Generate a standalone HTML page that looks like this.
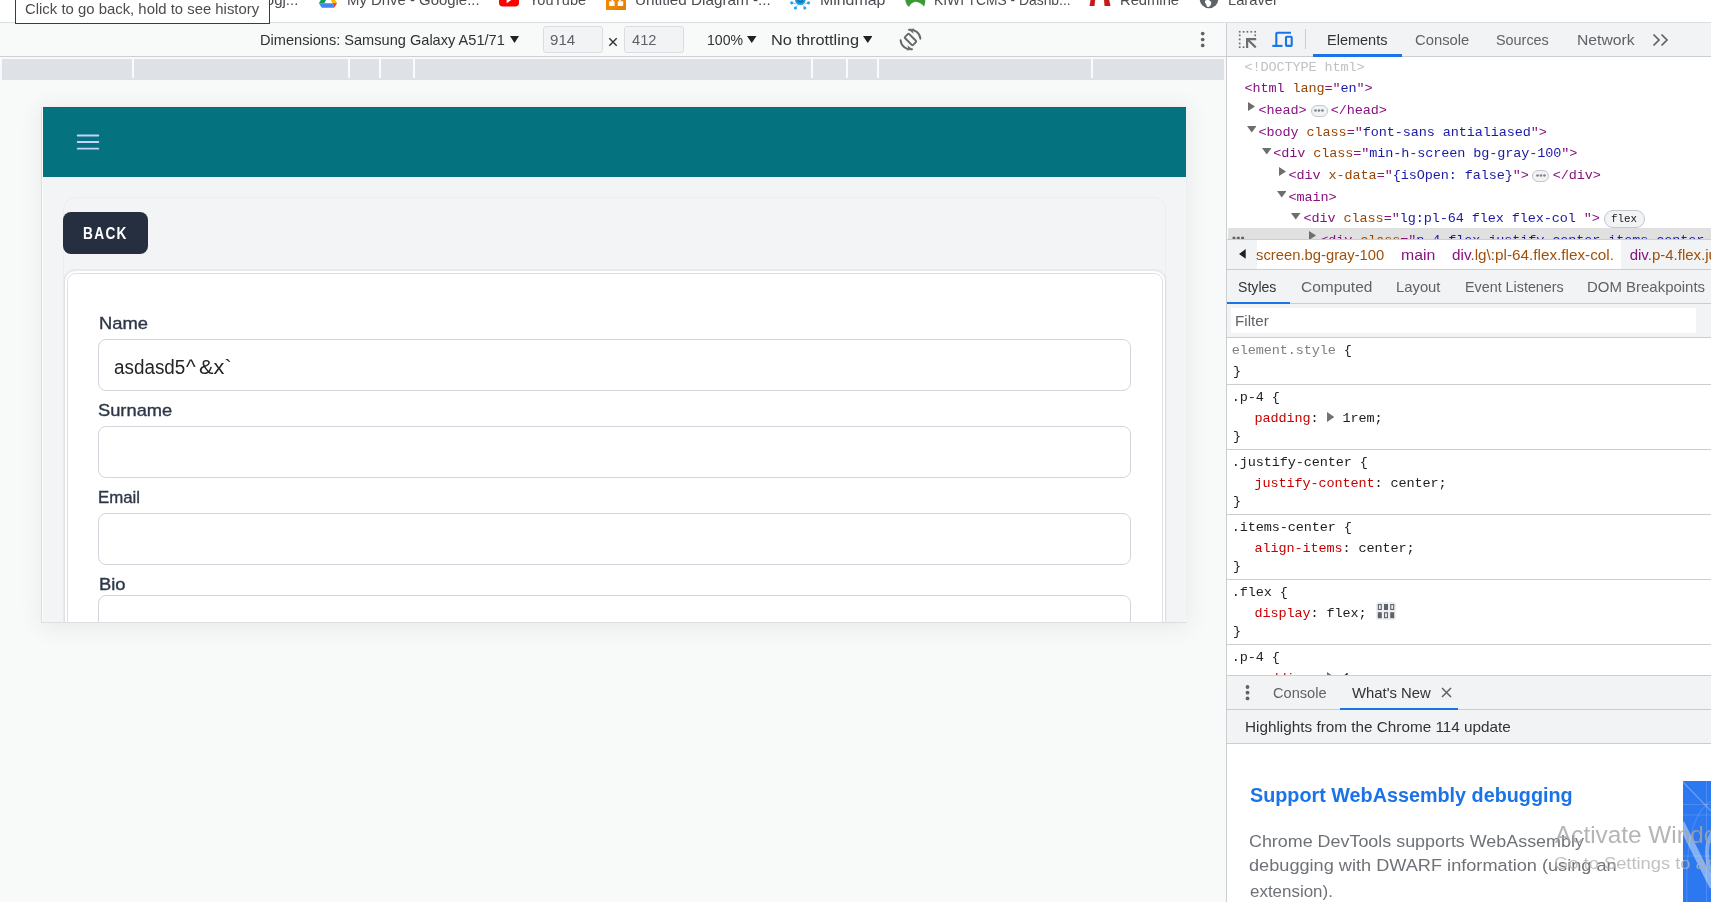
<!DOCTYPE html>
<html lang="en"><head><meta charset="utf-8"><title>DevTools</title>
<style>
html,body{margin:0;padding:0}
body{width:1711px;height:902px;overflow:hidden;position:relative;background:#f8f9f9;font-family:"Liberation Sans",sans-serif;}
.a{position:absolute;display:block}
.t{position:absolute;white-space:pre;line-height:1;font-family:"Liberation Sans",sans-serif;transform-origin:0 0;}
.m{font-family:"Liberation Mono",monospace;}
.bx{position:absolute;box-sizing:border-box}
</style></head><body>
<div id="root" style="position:absolute;left:0;top:0;width:1711px;height:902px;will-change:transform">

<div class="bx" style="left:0;top:0;width:1711px;height:23px;background:#fff;border-bottom:1px solid #dcdfe2;overflow:hidden">
<span id="bm0" class="t" style="left:265.80px;top:-7.90px;font-size:15px;color:#494c50;">ogj...</span>
<span id="bm1" class="t" style="left:347.30px;top:-7.90px;font-size:15px;color:#494c50;transform:scaleX(0.9941);">My Drive - Google...</span>
<span id="bm2" class="t" style="left:529.02px;top:-7.90px;font-size:15px;color:#494c50;transform:scaleX(0.9685);">YouTube</span>
<span id="bm3" class="t" style="left:635.46px;top:-7.90px;font-size:15px;color:#494c50;transform:scaleX(1.0183);">Untitled Diagram -...</span>
<span id="bm4" class="t" style="left:819.76px;top:-7.90px;font-size:15px;color:#494c50;transform:scaleX(1.0583);">Mindmap</span>
<span id="bm5" class="t" style="left:933.63px;top:-7.90px;font-size:15px;color:#494c50;transform:scaleX(0.9223);">KIWI TCMS - Dashb...</span>
<span id="bm6" class="t" style="left:1119.71px;top:-7.90px;font-size:15px;color:#494c50;transform:scaleX(0.9838);">Redmine</span>
<span id="bm7" class="t" style="left:1227.97px;top:-7.90px;font-size:15px;color:#494c50;transform:scaleX(0.9814);">Laravel</span>
<svg class="a" style="left:318px;top:-4px" width="20" height="12" viewBox="0 0 20 12">
<path d="M0.900 7.300L6.300 7.300L10.300 0L5.100 0z" fill="#0f9d58"/><path d="M14.400 7L19.100 7.300L14.900 0L10.400 0z" fill="#fbbc04"/>
<path d="M0.900 7.300L14.500 7.300L16.500 11.500L15.900 11.800L3.700 11.800z" fill="#4285f4"/><path d="M14.400 7L19.100 7.300L16.500 11.500z" fill="#ea4335"/></svg>
<svg class="a" style="left:499px;top:-9px" width="20" height="16" viewBox="0 0 21 16">
<rect x="0" y="0" width="21" height="16" rx="4" fill="#ff0000"/><path d="M8 3.500L14.500 8L8 12.500z" fill="#fff"/></svg>
<svg class="a" style="left:605.500px;top:-10.300px" width="20.300" height="20.300" viewBox="0 0 21 21">
<rect x="0" y="0" width="21" height="21" rx="1.500" fill="#f08705"/>
<path d="M7 21L21 12V21z" fill="#e07a00" opacity=".5"/><rect x="3.300" y="11.600" width="5.600" height="5" rx="0.800" fill="#fff"/><rect x="12.200" y="11.600" width="5.600" height="5" rx="0.800" fill="#fff"/>
<path d="M6.200 11.500L10 5M14.800 11.500L11 5" stroke="#fff" stroke-width="1.600"/></svg>
<svg class="a" style="left:789px;top:-6px" width="22" height="16" viewBox="0 0 22 16">
<path d="M7 10L2.700 8.800M15.600 10L19.500 8.800M9 10.500L6.400 14M13.600 10.500L15.800 14" stroke="#7cc7f0" stroke-width="0.900" fill="none"/>
<circle cx="11.300" cy="5.600" r="5.400" fill="#1e9be3"/><path d="M8.600 6.500Q11.300 9.300 14 6.500" stroke="#0b5f96" stroke-width="1.100" fill="none"/>
<g fill="#22a3ea"><circle cx="2.700" cy="8.800" r="1.600"/><circle cx="19.500" cy="8.800" r="1.600"/><circle cx="6.400" cy="14" r="1.600"/><circle cx="15.800" cy="14" r="1.600"/></g></svg>
<svg class="a" style="left:904px;top:-4px" width="22" height="12" viewBox="0 0 22 12">
<path d="M1.300 0L1.300 4.500C2 8 3.500 10 5.100 10.800C6.200 8.200 8.200 6.400 11.400 5.800C15 6.200 18 8 20 10.400C21.300 8 21.600 4 21 0z" fill="#3a9b35"/></svg>
<svg class="a" style="left:1089px;top:-12px" width="22" height="18" viewBox="0 0 22 18">
<path d="M0.500 18L3 4h4L5.500 18z" fill="#c61a1a"/><path d="M15.500 18L14.500 4h4l3 14z" fill="#c61a1a"/><path d="M5 4c3-5 9-5 12 0z" fill="#c61a1a"/></svg>
<svg class="a" style="left:1199px;top:-11px" width="20" height="20" viewBox="0 0 20 20">
<circle cx="10" cy="10" r="9.300" fill="#5f6368"/><path d="M6 12c2-2 5-1 6 1s-1 5-3 5s-1-3-3-4z" fill="#fff"/><path d="M12 3c2 0 4 2 5 4h-4c-2 0-3-3-1-4z" fill="#fff"/></svg>
</div>
<div class="bx" style="left:15px;top:-10px;width:255px;height:34px;background:#fff;border:1px solid #3c3c3c"></div>
<span id="tip" class="t" style="left:25.08px;top:1.30px;font-size:15px;color:#4c4c4c;transform:scaleX(0.9925);">Click to go back, hold to see history</span>
<div class="bx" style="left:0;top:56px;width:1226px;height:1px;background:#cdcfd3"></div>
<span id="dim" class="t" style="left:260.42px;top:32.30px;font-size:15px;color:#303134;transform:scaleX(0.9721);">Dimensions: Samsung Galaxy A51/71</span>
<svg class="a" style="left:509.5px;top:36px" width="9" height="7" viewBox="0 0 9 7"><path d="M0 0L9 0L4.5 7Z" fill="#202124"/></svg>
<div class="bx" style="left:543px;top:26px;width:60px;height:27px;background:#f1f3f4;border:1px solid #dadce0;border-radius:3px"></div>
<span id="in0" class="t" style="left:550.00px;top:32.30px;font-size:15px;color:#5f6368;transform:scaleX(1.0079);">914</span>
<div class="bx" style="left:624px;top:26px;width:60px;height:27px;background:#f1f3f4;border:1px solid #dadce0;border-radius:3px"></div>
<span id="in1" class="t" style="left:632.28px;top:32.30px;font-size:15px;color:#5f6368;transform:scaleX(0.9801);">412</span>
<svg class="a" style="left:608px;top:37px" width="10" height="10" viewBox="0 0 10 10"><path d="M1.300 1.300L8.700 8.700M8.700 1.300L1.300 8.700" stroke="#303134" stroke-width="1.400"/></svg>
<span id="zoom" class="t" style="left:706.70px;top:32.30px;font-size:15px;color:#303134;transform:scaleX(0.9396);">100%</span>
<svg class="a" style="left:747px;top:36px" width="9.5" height="7" viewBox="0 0 9.5 7"><path d="M0 0L9.5 0L4.75 7Z" fill="#202124"/></svg>
<span id="thr" class="t" style="left:770.78px;top:32.30px;font-size:15px;color:#303134;transform:scaleX(1.0876);">No throttling</span>
<svg class="a" style="left:862.6px;top:36px" width="9.5" height="7" viewBox="0 0 9.5 7"><path d="M0 0L9.5 0L4.75 7Z" fill="#202124"/></svg>
<svg class="a" style="left:896px;top:25px" width="29" height="29" viewBox="-14.500 -14.500 29 29">
<g fill="none" stroke="#666" stroke-width="1.900" stroke-linecap="round" stroke-linejoin="round">
<rect x="-5.700" y="-2.900" width="11.400" height="5.800" rx="1" transform="rotate(45)"/>
<path d="M-1.500 -9.700A10 10 0 0 1 9.900 -0.800"/>
<path d="M1.500 9.700A10 10 0 0 1 -9.900 0.800"/>
</g>
<path d="M-3.300 -9.500L2.300 -6.200L0.800 -9.700L2.300 -11.800z" fill="#6e6e6e" transform="rotate(8)"/>
<path d="M3.300 9.500L-2.300 6.200L-0.800 9.700L-2.300 11.800z" fill="#6e6e6e" transform="rotate(8)"/>
</svg>
<svg class="a" style="left:1199px;top:30px" width="8" height="20" viewBox="0 0 8 20"><g fill="#5f6368"><circle cx="3.700" cy="3.600" r="1.850"/><circle cx="3.700" cy="9.500" r="1.850"/><circle cx="3.700" cy="15.400" r="1.850"/></g></svg>
<div class="bx" style="left:2px;top:59px;width:1222px;height:21px;background:#dee1e6"></div>
<div class="bx" style="left:132px;top:59px;width:2px;height:19px;background:#fbfbfc"></div>
<div class="bx" style="left:348px;top:59px;width:2px;height:19px;background:#fbfbfc"></div>
<div class="bx" style="left:379px;top:59px;width:2px;height:19px;background:#fbfbfc"></div>
<div class="bx" style="left:413px;top:59px;width:2px;height:19px;background:#fbfbfc"></div>
<div class="bx" style="left:811px;top:59px;width:2px;height:19px;background:#fbfbfc"></div>
<div class="bx" style="left:846px;top:59px;width:2px;height:19px;background:#fbfbfc"></div>
<div class="bx" style="left:877px;top:59px;width:2px;height:19px;background:#fbfbfc"></div>
<div class="bx" style="left:1090.5px;top:59px;width:2px;height:19px;background:#fbfbfc"></div>
<div class="bx" id="page" style="left:43px;top:107px;width:1143px;height:515px;background:#f3f4f6;overflow:hidden;box-shadow:0 3px 21px 2px rgba(60,64,67,.088)">
<div class="bx" style="left:0;top:0;width:1143px;height:70px;background:#05737f"></div>
<div class="bx" style="left:0;top:0;width:1143px;height:1px;background:#016b78"></div>
<svg class="a" style="left:30px;top:20px" width="30" height="30" viewBox="0 0 24 24"><path d="M3.750 6.750h16.500M3.750 12h16.500M3.750 17.250h16.500" stroke="#c7d2fe" stroke-width="1.500" stroke-linecap="round" fill="none"/></svg>
<div class="bx" style="left:20px;top:89.500px;width:1103px;height:600px;border-radius:12px;border:1px solid rgba(228,230,235,.5)"></div>
<div class="bx" style="left:20px;top:105px;width:85px;height:42px;background:#252f3f;border-radius:8px"></div>
<div class="bx" style="left:21px;top:162px;width:1102px;height:500px;background:#fff;border:2px solid #e7e9ed;border-left:1px solid #dfe1e6;border-right:1px solid #dfe1e6;border-radius:12px;box-shadow:-1px 0 0 rgba(226,228,233,.35),1px 0 0 rgba(226,228,233,.35)"></div>
<div class="bx" style="left:24px;top:166px;width:1096px;height:500px;background:#fff;border:1px solid #dddfe5;border-radius:8.500px"></div>
<div class="bx" style="left:55px;top:232px;width:1033px;height:52px;background:#fff;border:1px solid #d2d6dc;border-radius:8px"></div>
<div class="bx" style="left:55px;top:319px;width:1033px;height:52px;background:#fff;border:1px solid #d2d6dc;border-radius:8px"></div>
<div class="bx" style="left:55px;top:406px;width:1033px;height:52px;background:#fff;border:1px solid #d2d6dc;border-radius:8px"></div>
<div class="bx" style="left:55px;top:488px;width:1033px;height:52px;background:#fff;border:1px solid #d2d6dc;border-radius:8px"></div>
</div>
<div class="bx" style="left:41px;top:107px;width:1px;height:516px;background:#dcdde0"></div>
<div class="bx" style="left:41px;top:622px;width:1145px;height:1px;background:#dcdde0"></div>
<div class="bx" style="left:42px;top:106px;width:1px;height:516px;background:#fcfcfc"></div>
<div class="bx" style="left:43px;top:106px;width:1143px;height:1px;background:#f5efef"></div>
<span id="back" class="t" style="left:83.40px;top:225.69px;font-size:15.6px;color:#fff;transform:scaleX(0.8773);font-weight:700;letter-spacing:1.5px;">BACK</span>
<span id="l0" class="t" style="left:98.50px;top:315.75px;font-size:16.6px;color:#2d3748;transform:scaleX(1.1074);-webkit-text-stroke:.35px #2d3748;">Name</span>
<span id="l1" class="t" style="left:97.88px;top:402.85px;font-size:16.6px;color:#2d3748;transform:scaleX(1.1020);-webkit-text-stroke:.35px #2d3748;">Surname</span>
<span id="l2" class="t" style="left:98.26px;top:490.15px;font-size:16.6px;color:#2d3748;transform:scaleX(1.0140);-webkit-text-stroke:.35px #2d3748;">Email</span>
<span id="l3" class="t" style="left:98.71px;top:576.95px;font-size:16.6px;color:#2d3748;transform:scaleX(1.1083);-webkit-text-stroke:.35px #2d3748;">Bio</span>
<span id="val" class="t" style="left:113.97px;top:356.67px;font-size:20px;color:#242424;transform:scaleX(0.9426);">asdasd5</span>
<span id="val2" class="t" style="left:186.43px;top:356.67px;font-size:20px;color:#242424;transform:scaleX(1.0327);">^</span>
<span id="val3" class="t" style="left:198.51px;top:356.67px;font-size:20px;color:#242424;transform:scaleX(1.0884);">&amp;x`</span>
<div class="bx" style="left:1226px;top:23px;width:485px;height:879px;background:#fff;border-left:1px solid #cbcdd1"></div>
<div class="bx" style="left:1227px;top:23px;width:484px;height:34px;background:#f1f3f4;border-bottom:1px solid #cbcdd1"></div>
<svg class="a" style="left:1238px;top:30px" width="20" height="19" viewBox="0 0 20 19"><g fill="#6e6e6e">
<rect x="0.85" y="0.950" width="1.700" height="1.700"/>
<rect x="4.75" y="0.950" width="1.700" height="1.700"/>
<rect x="8.55" y="0.950" width="1.700" height="1.700"/>
<rect x="12.450000000000001" y="0.950" width="1.700" height="1.700"/>
<rect x="16.349999999999998" y="0.950" width="1.700" height="1.700"/>
<rect x="0.850" y="4.45" width="1.700" height="1.700"/>
<rect x="0.850" y="8.55" width="1.700" height="1.700"/>
<rect x="0.850" y="12.65" width="1.700" height="1.700"/>
<rect x="0.850" y="16.349999999999998" width="1.700" height="1.700"/>
<rect x="16.350" y="4.450" width="1.700" height="1.700"/><rect x="4.750" y="16.350" width="1.700" height="1.700"/>
<path d="M8 8h10.200v2.200h-6.300l6.600 6.400l-1.500 1.600l-6.800-6.600v6.400h-2.200z"/></g></svg>
<svg class="a" style="left:1271px;top:30px" width="24" height="19" viewBox="0 0 24 19"><g fill="none" stroke="#1a73e8" stroke-width="2.100">
<path d="M20 2.700H6.300a1 1 0 0 0-1 1V15.500"/><path d="M1.300 15.900h10.200"/><rect x="15" y="6.800" width="5.700" height="9.100" rx="0.800"/></g></svg>
<div class="bx" style="left:1305px;top:29px;width:1px;height:20px;background:#cbcdd1"></div>
<span id="tabE" class="t" style="left:1327.14px;top:32.10px;font-size:15px;color:#333;transform:scaleX(0.9669);">Elements</span>
<span id="tabC" class="t" style="left:1414.86px;top:32.10px;font-size:15px;color:#5f6368;transform:scaleX(0.9867);">Console</span>
<span id="tabS" class="t" style="left:1496.47px;top:32.10px;font-size:15px;color:#5f6368;transform:scaleX(0.9595);">Sources</span>
<span id="tabN" class="t" style="left:1576.68px;top:32.10px;font-size:15px;color:#5f6368;transform:scaleX(1.0467);">Network</span>
<svg class="a" style="left:1652px;top:33px" width="17" height="14" viewBox="0 0 17 14"><path d="M1.500 1.500L7 7L1.500 12.500M9.500 1.500L15 7L9.500 12.500" fill="none" stroke="#5f6368" stroke-width="1.700"/></svg>
<div class="bx" style="left:1313px;top:54px;width:89px;height:3px;background:#1a73e8"></div>
<span id="e0" class="t m" style="left:1244.40px;top:61.00px;font-size:13.5px;letter-spacing:-0.101px;color:#c0c0c0;">&lt;!DOCTYPE html&gt;</span>
<span id="e1" class="t m" style="left:1244.40px;top:82.00px;font-size:13.5px;letter-spacing:-0.101px;color:#222;"><span style="color:#881280">&lt;html </span><span style="color:#994500">lang</span><span style="color:#881280">="</span><span style="color:#1a1aa6">en</span><span style="color:#881280">"&gt;</span></span>
<svg class="a" style="left:1247.6px;top:101.8px" width="7" height="9" viewBox="0 0 7 9"><path d="M0 0L7 4.5L0 9Z" fill="#6e6e6e"/></svg>
<span id="e2" class="t m" style="left:1258.60px;top:104.00px;font-size:13.5px;letter-spacing:-0.101px;color:#222;"><span style="color:#881280">&lt;head&gt;</span>  <span style="color:#881280"> &lt;/head&gt;</span></span>
<svg class="a" style="left:1246.8px;top:126.2px" width="9.5" height="6.5" viewBox="0 0 9.5 6.5"><path d="M0 0L9.5 0L4.75 6.5Z" fill="#6e6e6e"/></svg>
<span id="e3" class="t m" style="left:1258.60px;top:126.00px;font-size:13.5px;letter-spacing:-0.101px;color:#222;"><span style="color:#881280">&lt;body </span><span style="color:#994500">class</span><span style="color:#881280">="</span><span style="color:#1a1aa6">font-sans antialiased</span><span style="color:#881280">"&gt;</span></span>
<svg class="a" style="left:1261.6px;top:147.8px" width="9.5" height="6.5" viewBox="0 0 9.5 6.5"><path d="M0 0L9.5 0L4.75 6.5Z" fill="#6e6e6e"/></svg>
<span id="e4" class="t m" style="left:1273.20px;top:147.00px;font-size:13.5px;letter-spacing:-0.101px;color:#222;"><span style="color:#881280">&lt;div </span><span style="color:#994500">class</span><span style="color:#881280">="</span><span style="color:#1a1aa6">min-h-screen bg-gray-100</span><span style="color:#881280">"&gt;</span></span>
<svg class="a" style="left:1278.8px;top:166.6px" width="7" height="9" viewBox="0 0 7 9"><path d="M0 0L7 4.5L0 9Z" fill="#6e6e6e"/></svg>
<span id="e5" class="t m" style="left:1288.60px;top:169.00px;font-size:13.5px;letter-spacing:-0.101px;color:#222;"><span style="color:#881280">&lt;div </span><span style="color:#994500">x-data</span><span style="color:#881280">="</span><span style="color:#1a1aa6">{isOpen: false}</span><span style="color:#881280">"&gt;</span>  <span style="color:#881280"> &lt;/div&gt;</span></span>
<svg class="a" style="left:1276.8px;top:191.4px" width="9.5" height="6.5" viewBox="0 0 9.5 6.5"><path d="M0 0L9.5 0L4.75 6.5Z" fill="#6e6e6e"/></svg>
<span id="e6" class="t m" style="left:1288.60px;top:191.00px;font-size:13.5px;letter-spacing:-0.101px;color:#222;"><span style="color:#881280">&lt;main&gt;</span></span>
<svg class="a" style="left:1291.4px;top:213px" width="9.5" height="6.5" viewBox="0 0 9.5 6.5"><path d="M0 0L9.5 0L4.75 6.5Z" fill="#6e6e6e"/></svg>
<span id="e7" class="t m" style="left:1303.60px;top:212.00px;font-size:13.5px;letter-spacing:-0.101px;color:#222;"><span style="color:#881280">&lt;div </span><span style="color:#994500">class</span><span style="color:#881280">="</span><span style="color:#1a1aa6">lg:pl-64 flex flex-col </span><span style="color:#881280">"&gt;</span></span>
<div class="bx" style="left:1310.5px;top:104.5px;width:17px;height:12px;background:#f1f3f4;border:1px solid #c4c7cc;border-radius:6px"></div><svg class="a" style="left:1314.0px;top:109.0px" width="10" height="3" viewBox="0 0 10 3"><g fill="#80868b"><circle cx="1.500" cy="1.500" r="1.350"/><circle cx="5" cy="1.500" r="1.350"/><circle cx="8.500" cy="1.500" r="1.350"/></g></svg>
<div class="bx" style="left:1532px;top:169.5px;width:17px;height:12px;background:#f1f3f4;border:1px solid #c4c7cc;border-radius:6px"></div><svg class="a" style="left:1535.5px;top:174.0px" width="10" height="3" viewBox="0 0 10 3"><g fill="#80868b"><circle cx="1.500" cy="1.500" r="1.350"/><circle cx="5" cy="1.500" r="1.350"/><circle cx="8.500" cy="1.500" r="1.350"/></g></svg>
<div class="bx" style="left:1604px;top:210px;width:41px;height:18px;background:#f1f3f4;border:1px solid #c4c7cc;border-radius:9px"></div>
<span id="fxb" class="t m" style="left:1611.41px;top:212.88px;font-size:11.5px;color:#202124;transform:scaleX(0.9459);">flex</span>
<div class="bx" style="left:1228px;top:228px;width:483px;height:12px;background:#e0e0e0;overflow:hidden">
<svg class="a" style="left:3.500px;top:7.500px" width="13" height="4" viewBox="0 0 13 4"><g fill="#5f6368"><circle cx="2" cy="2" r="1.600"/><circle cx="6.300" cy="2" r="1.600"/><circle cx="10.600" cy="2" r="1.600"/></g></svg>
<svg class="a" style="left:81px;top:2.7px" width="7" height="9" viewBox="0 0 7 9"><path d="M0 0L7 4.5L0 9Z" fill="#6e6e6e"/></svg>
<span class="t m" style="left:92.300px;top:6.00px;font-size:13.5px;letter-spacing:-0.101px"><span style="color:#881280">&lt;div </span><span style="color:#994500">class</span><span style="color:#881280">="</span><span style="color:#1a1aa6">p-4 flex justify-center items-center</span></span>
</div>
<div class="bx" style="left:1227px;top:239px;width:484px;height:31px;background:#fff;border-top:1px solid #cbcdd1;border-bottom:1px solid #cbcdd1"></div>
<div class="bx" style="left:1227px;top:240px;width:30px;height:29px;background:#f1f3f4"></div>
<div class="bx" style="left:1621px;top:240px;width:90px;height:29px;background:#f1f3f4"></div>
<svg class="a" style="left:1239.200px;top:249.200px" width="7.200" height="9.800" viewBox="0 0 8 11"><path d="M7.500 0L0 5.500L7.500 11z" fill="#202124"/></svg>
<span id="bc0" class="t" style="left:1256.36px;top:246.80px;font-size:15px;color:#a0500a;transform:scaleX(0.9863);">screen.bg-gray-100</span>
<span id="bc1" class="t" style="left:1401.36px;top:246.80px;font-size:15px;color:#881280;transform:scaleX(1.0552);">main</span>
<span id="bc2" class="t" style="left:1451.97px;top:246.80px;font-size:15px;color:#a0500a;transform:scaleX(1.0190);"><span style="color:#881280">div</span>.lg\:pl-64.flex.flex-col.</span>
<div class="bx" style="left:1621px;top:240px;width:90px;height:29px;overflow:hidden">
</div>
<span id="bc3" class="t" style="left:1629.70px;top:246.80px;font-size:15px;color:#a0500a;"><span style="color:#881280">div</span>.p-4.flex.justify</span>
<div class="bx" style="left:1227px;top:270px;width:484px;height:34px;background:#f1f3f4;border-bottom:1px solid #cbcdd1"></div>
<span id="st0" class="t" style="left:1238.02px;top:278.90px;font-size:15px;color:#333;transform:scaleX(0.9402);">Styles</span>
<span id="st1" class="t" style="left:1300.52px;top:278.90px;font-size:15px;color:#5f6368;transform:scaleX(1.0309);">Computed</span>
<span id="st2" class="t" style="left:1396.29px;top:278.90px;font-size:15px;color:#5f6368;transform:scaleX(0.9872);">Layout</span>
<span id="st3" class="t" style="left:1465.41px;top:278.90px;font-size:15px;color:#5f6368;transform:scaleX(0.9548);">Event Listeners</span>
<span id="st4" class="t" style="left:1587.20px;top:278.90px;font-size:15px;color:#5f6368;transform:scaleX(0.9975);">DOM Breakpoints</span>
<div class="bx" style="left:1227px;top:301.500px;width:63px;height:2.500px;background:#1a73e8"></div>
<div class="bx" style="left:1227px;top:304px;width:484px;height:34px;background:#f1f3f4;border-bottom:1px solid #cbcdd1"></div>
<div class="bx" style="left:1231px;top:308px;width:465px;height:25px;background:#fff"></div>
<span id="flt" class="t" style="left:1235.12px;top:313.30px;font-size:15px;color:#5f6368;transform:scaleX(1.0104);">Filter</span>
<span id="s0a" class="t m" style="left:1231.80px;top:344.00px;font-size:13.5px;letter-spacing:-0.101px;color:#222;"><span style="color:#808080">element.style</span> {</span><span id="s0c" class="t m" style="left:1233.00px;top:365.00px;font-size:13.5px;letter-spacing:-0.101px;color:#222;">}</span>
<div class="bx" style="left:1227px;top:384.0px;width:484px;height:1px;background:#cbcdd1"></div>
<span id="s1a" class="t m" style="left:1231.80px;top:391.00px;font-size:13.5px;letter-spacing:-0.101px;color:#222;"><span style="color:#222">.p-4</span> {</span><span id="s1b" class="t m" style="left:1254.40px;top:412.00px;font-size:13.5px;letter-spacing:-0.101px;color:#222;"><span style="color:#c80000">padding</span>:   1rem;</span><svg class="a" style="left:1326.8px;top:412.2px" width="7.5" height="10" viewBox="0 0 7.5 10"><path d="M0 0L7.5 5.0L0 10Z" fill="#727272"/></svg><span id="s1c" class="t m" style="left:1233.00px;top:430.00px;font-size:13.5px;letter-spacing:-0.101px;color:#222;">}</span>
<div class="bx" style="left:1227px;top:449.0px;width:484px;height:1px;background:#cbcdd1"></div>
<span id="s2a" class="t m" style="left:1231.80px;top:456.00px;font-size:13.5px;letter-spacing:-0.101px;color:#222;"><span style="color:#222">.justify-center</span> {</span><span id="s2b" class="t m" style="left:1254.40px;top:477.00px;font-size:13.5px;letter-spacing:-0.101px;color:#222;"><span style="color:#c80000">justify-content</span>: center;</span><span id="s2c" class="t m" style="left:1233.00px;top:495.00px;font-size:13.5px;letter-spacing:-0.101px;color:#222;">}</span>
<div class="bx" style="left:1227px;top:514.0px;width:484px;height:1px;background:#cbcdd1"></div>
<span id="s3a" class="t m" style="left:1231.80px;top:521.00px;font-size:13.5px;letter-spacing:-0.101px;color:#222;"><span style="color:#222">.items-center</span> {</span><span id="s3b" class="t m" style="left:1254.40px;top:542.00px;font-size:13.5px;letter-spacing:-0.101px;color:#222;"><span style="color:#c80000">align-items</span>: center;</span><span id="s3c" class="t m" style="left:1233.00px;top:560.00px;font-size:13.5px;letter-spacing:-0.101px;color:#222;">}</span>
<div class="bx" style="left:1227px;top:579.0px;width:484px;height:1px;background:#cbcdd1"></div>
<span id="s4a" class="t m" style="left:1231.80px;top:586.00px;font-size:13.5px;letter-spacing:-0.101px;color:#222;"><span style="color:#222">.flex</span> {</span><span id="s4b" class="t m" style="left:1254.40px;top:607.00px;font-size:13.5px;letter-spacing:-0.101px;color:#222;"><span style="color:#c80000">display</span>: flex;</span><span id="s4c" class="t m" style="left:1233.00px;top:625.00px;font-size:13.5px;letter-spacing:-0.101px;color:#222;">}</span>
<div class="bx" style="left:1227px;top:644.0px;width:484px;height:1px;background:#cbcdd1"></div>
<span id="s5a" class="t m" style="left:1231.80px;top:651.00px;font-size:13.5px;letter-spacing:-0.101px;color:#222;"><span style="color:#222">.p-4</span> {</span><span id="s5b" class="t m" style="left:1254.40px;top:672.00px;font-size:13.5px;letter-spacing:-0.101px;color:#222;"><span style="color:#c80000">padding</span>:   1rem;</span><svg class="a" style="left:1326.8px;top:672.2px" width="7.5" height="10" viewBox="0 0 7.5 10"><path d="M0 0L7.5 5.0L0 10Z" fill="#727272"/></svg><span id="s5c" class="t m" style="left:1233.00px;top:690.00px;font-size:13.5px;letter-spacing:-0.101px;color:#222;">}</span>
<svg class="a" style="left:1376px;top:602px" width="20" height="18" viewBox="0 0 20 18"><rect x="0" y="0" width="20" height="18" rx="2.500" fill="#eceef1"/>
<g fill="#5f6368"><rect x="8" y="2" width="4" height="6"/><rect x="1.800" y="10.200" width="4" height="6"/><rect x="14.200" y="10.200" width="4" height="6"/></g>
<g fill="none" stroke="#5f6368" stroke-width="1.100"><rect x="2.350" y="2.550" width="2.900" height="4.900"/><rect x="14.750" y="2.550" width="2.900" height="4.900"/><rect x="8.550" y="10.750" width="2.900" height="4.900"/></g></svg>
<div class="bx" style="left:1227px;top:675px;width:484px;height:227px;background:#fff"></div>
<div class="bx" style="left:1227px;top:675px;width:484px;height:35px;background:#f1f3f4;border-top:1px solid #cbcdd1;border-bottom:1px solid #cbcdd1"></div>
<svg class="a" style="left:1244px;top:684px" width="8" height="18" viewBox="0 0 8 18"><g fill="#5f6368"><circle cx="3.500" cy="3" r="1.900"/><circle cx="3.500" cy="8.700" r="1.900"/><circle cx="3.500" cy="14.400" r="1.900"/></g></svg>
<span id="dr0" class="t" style="left:1273.39px;top:685.00px;font-size:15px;color:#5f6368;transform:scaleX(0.9742);">Console</span>
<span id="dr1" class="t" style="left:1351.57px;top:685.00px;font-size:15px;color:#333;transform:scaleX(0.9903);">What's New</span>
<svg class="a" style="left:1440.500px;top:687px" width="11" height="11" viewBox="0 0 11 11"><path d="M1 1L10 10M10 1L1 10" stroke="#5f6368" stroke-width="1.500"/></svg>
<div class="bx" style="left:1339.500px;top:707.500px;width:118px;height:2.500px;background:#1a73e8"></div>
<div class="bx" style="left:1227px;top:710px;width:484px;height:34px;background:#f1f3f4;border-bottom:1px solid #cbcdd1"></div>
<span id="hl" class="t" style="left:1244.83px;top:718.90px;font-size:15px;color:#333;transform:scaleX(1.0196);">Highlights from the Chrome 114 update</span>
<span id="wn0" class="t" style="left:1249.77px;top:785.07px;font-size:20px;color:#1a73e8;transform:scaleX(0.9887);font-weight:700;">Support WebAssembly debugging</span>
<span id="wn1" class="t" style="left:1249.13px;top:832.74px;font-size:16.25px;color:#6e7277;transform:scaleX(1.1012);">Chrome DevTools supports WebAssembly</span>
<span id="wn2" class="t" style="left:1249.25px;top:857.44px;font-size:16.25px;color:#6e7277;transform:scaleX(1.1172);">debugging with DWARF information (using an</span>
<span id="wn3" class="t" style="left:1249.70px;top:882.84px;font-size:16.25px;color:#6e7277;transform:scaleX(1.0429);">extension).</span>
<svg class="a" style="left:1683px;top:781px" width="28" height="121" viewBox="0 0 28 121">
<rect width="28" height="121" fill="#2b78f0"/>
<g stroke="#fff" fill="none">
<path d="M0 1L28 30" stroke-opacity=".28" stroke-width="1.300"/>
<path d="M0 23.500H28M0 34H28M0 75H28M23.500 0V121" stroke-opacity=".16" stroke-width="1"/>
<path d="M28 20C10 32 2 60 4 121" stroke-opacity=".14" stroke-width="1.200"/>
<path d="M-2 42L30 106" stroke-opacity=".42" stroke-width="7"/>
<path d="M30 50C22 62 22 80 30 95" stroke-opacity=".35" stroke-width="4"/>
</g></svg>
<span id="wm0" class="t" style="left:1555.20px;top:822.56px;font-size:24.5px;color:rgba(165,165,165,.82);transform:scaleX(.993);">Activate Windows</span>
<span id="wm1" class="t" style="left:1553.50px;top:855.58px;font-size:16.8px;color:rgba(178,178,178,.8);transform:scaleX(1.092);">Go to Settings to activate</span>
</div></body></html>
